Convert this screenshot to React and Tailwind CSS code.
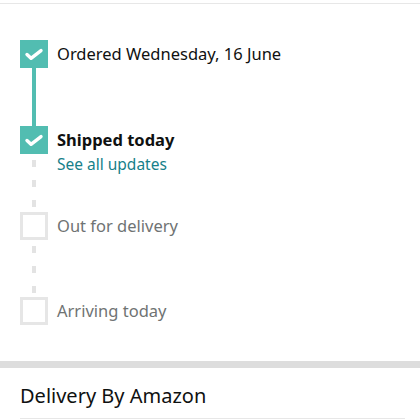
import React from "react";

const Check = () => (
  <svg width="28" height="28" viewBox="0 0 28 28" fill="none">
    <path d="M7 14.5l4 3.8L21 10.6" stroke="#fff" strokeWidth="3.4" strokeLinecap="round" strokeLinejoin="round" />
  </svg>
);

const Box = ({ done }) =>
  done ? (
    <div className="w-[28px] h-[28px] bg-[#52bdb1] shrink-0">
      <Check />
    </div>
  ) : (
    <div className="w-[28px] h-[28px] border-[3px] border-[#e6e6e6] bg-white shrink-0" />
  );

const steps = [
  { label: "Ordered Wednesday, 16 June", done: true, line: "solid", h: "h-[86px]" },
  { label: "Shipped today", done: true, bold: true, link: "See all updates", line: "dashed", h: "h-[86px]" },
  { label: "Out for delivery", line: "dashed", h: "h-[85px]" },
  { label: "Arriving today", h: "h-[28px]" },
];

export default function App() {
  return (
    <div className="w-[420px] h-[420px] bg-white overflow-hidden font-['Noto_Sans',sans-serif]">
      <div className="h-[3px]" />
      <div className="h-px bg-[#e7e7e7]" />
      <div className="pl-[20px] pt-[36px] h-[357px]">
        {steps.map((s) => (
          <div key={s.label} className={`flex ${s.h}`}>
            <div className="flex flex-col items-center w-[28px]">
              <Box done={s.done} />
              {s.line === "solid" && <div className="w-[4px] flex-1 bg-[#52bdb1]" />}
              {s.line === "dashed" && (
                <div className="w-[4px] flex-1 bg-[repeating-linear-gradient(to_bottom,transparent_0_6px,#e3e3e3_6px_13px,transparent_13px_20px)]" />
              )}
            </div>
            <div className="ml-[9px] flex flex-col">
              <div
                className={`h-[28px] flex items-center text-[16.5px] ${
                  s.bold ? "font-bold text-[#0f1111]" : s.done ? "text-[#0f1111]" : "text-[#6f7373]"
                }`}
              >
                {s.label}
              </div>
              {s.link && <div className="text-[15.5px] leading-[20px] text-[#17808a]">{s.link}</div>}
            </div>
          </div>
        ))}
      </div>
      <div className="h-[7px] bg-[#dddddd]" />
      <div className="px-[20px] pt-[14px]">
        <div className="text-[20px] leading-[28px] text-[#0f1111]">Delivery By Amazon</div>
        <div className="mt-[8px] h-px bg-[#e7e7e7] mr-[-5px]" />
      </div>
    </div>
  );
}
